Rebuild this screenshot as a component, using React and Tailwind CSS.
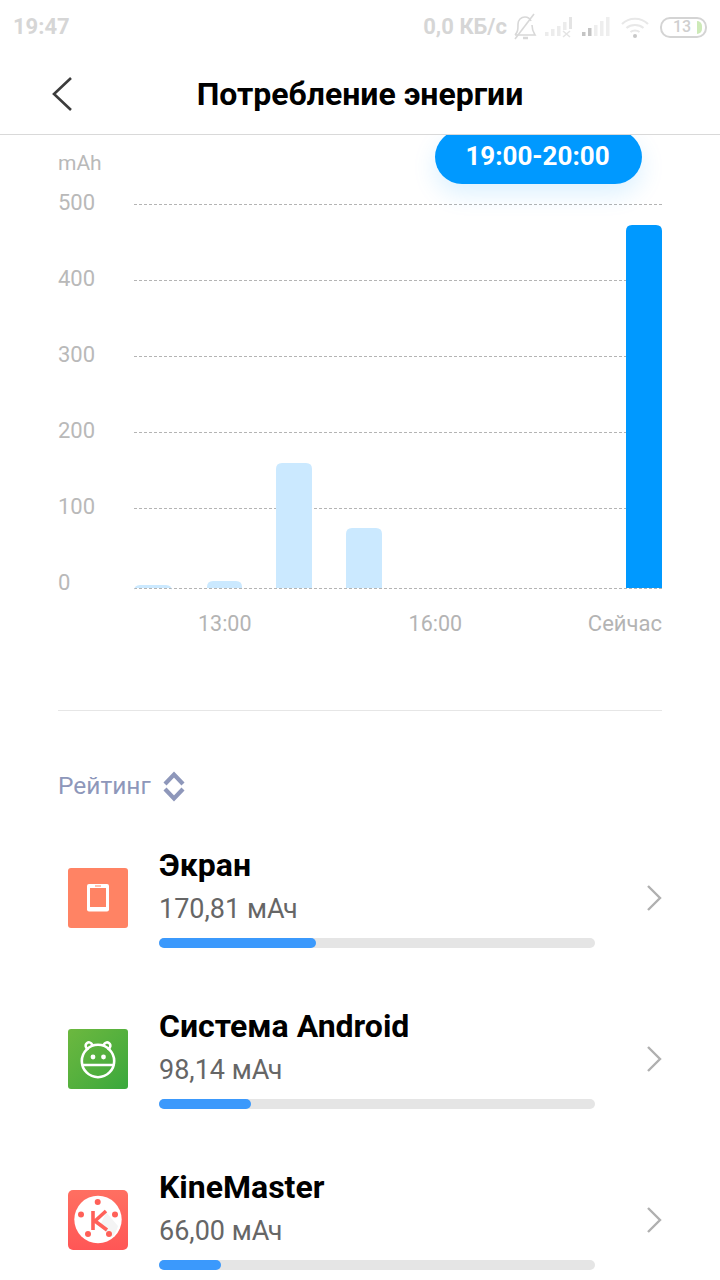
const yLabels = ['500', '400', '300', '200', '100', '0'];

const bars = [
  { x: 134, y: 585, w: 38, color: '#cbe9ff' },
  { x: 207, y: 581, w: 35, color: '#cbe9ff' },
  { x: 276, y: 463, w: 36, color: '#cbe9ff' },
  { x: 346, y: 528, w: 36, color: '#cbe9ff' },
  { x: 626, y: 225, w: 36, color: '#0099ff' },
];

const gridLines = [204, 280, 356, 432, 508, 588];

function ScreenIcon() {
  return (
    <div className="w-[60px] h-[60px] rounded-[3px] bg-[#ff8364] flex items-center justify-center">
      <svg width="22" height="28" viewBox="0 0 22 28">
        <rect x="0" y="0" width="22" height="27.5" rx="2" fill="#fff" />
        <rect x="3" y="4" width="16" height="19" fill="#ff8364" />
        <rect x="8" y="1.5" width="6" height="1" fill="#ff8364" />
      </svg>
    </div>
  );
}

function AndroidIcon() {
  return (
    <div className="w-[60px] h-[60px] rounded-[3px] bg-gradient-to-br from-[#6cb83f] to-[#38a83c]">
      <svg width="60" height="60" viewBox="0 0 60 60" fill="none" stroke="#fff" strokeWidth="2.6">
        <circle cx="30" cy="32" r="16.2" />
        <path d="M13.5 36 H46.5" />
        <path d="M20 21 L18.2 18.5 A3.2 3.2 0 0 1 23.6 14.8 L25.5 17" />
        <path d="M40 21 L41.8 18.5 A3.2 3.2 0 0 0 36.4 14.8 L34.5 17" />
        <circle cx="25" cy="28" r="2.4" fill="#fff" stroke="none" />
        <circle cx="35.5" cy="28" r="2.4" fill="#fff" stroke="none" />
      </svg>
    </div>
  );
}

function KineIcon() {
  return (
    <div className="w-[60px] h-[60px] rounded-[5px] bg-gradient-to-b from-[#ff6f61] to-[#ff5656]">
      <svg width="60" height="60" viewBox="0 0 60 60">
        <circle cx="30" cy="29.5" r="23.7" fill="#fff" />
        <path d="M38 22 L50 36 A23 23 0 0 1 44 47 L32 36 Z" fill="#f4f4f4" />
        <circle cx="29.7" cy="12" r="3" fill="#ff6058" />
        <circle cx="13" cy="24.5" r="3" fill="#ff6058" />
        <circle cx="47" cy="24.5" r="3" fill="#ff6058" />
        <circle cx="20" cy="44" r="3" fill="#ff6058" />
        <circle cx="41" cy="44" r="3" fill="#ff6058" />
        <path d="M25 21 V40 M38 21 L27 31 L39 40" fill="none" stroke="#ff6058" strokeWidth="3.6" />
      </svg>
    </div>
  );
}

const apps = [
  { name: 'Экран', value: '170,81 мАч', fill: 'w-[157px]', Icon: ScreenIcon },
  { name: 'Система Android', value: '98,14 мАч', fill: 'w-[92px]', Icon: AndroidIcon },
  { name: 'KineMaster', value: '66,00 мАч', fill: 'w-[62px]', Icon: KineIcon },
];

function StatusIcons() {
  return (
    <div className="flex items-center">
      <svg width="26" height="30" viewBox="0 0 26 30" fill="none" stroke="#d8d8d8" strokeWidth="1.6" className="ml-[5px]">
        <path d="M3 23 C6 20 6 17 6 12 C6 8 9 5 13 5 C16 5 18 6.5 19 9 M20 13 C20 18 21 20 23 23 H3" />
        <path d="M3 27 L22 2" />
        <path d="M11 26 H16" strokeWidth="2.5" />
      </svg>
      <svg width="30" height="24" viewBox="0 0 30 24" className="ml-[6px]" fill="#ececec">
        <rect x="1" y="17" width="3.5" height="4" />
        <rect x="7" y="14" width="3.5" height="7" />
        <rect x="13" y="11" width="3.5" height="10" />
        <rect x="19" y="7" width="3.5" height="8" />
        <rect x="25" y="2" width="3" height="12" fill="#e4e4e4" />
        <path d="M19 16 L26 22 M26 16 L19 22" stroke="#e4e4e4" strokeWidth="1.6" />
      </svg>
      <svg width="30" height="24" viewBox="0 0 30 24" className="ml-[7px]" fill="#eeeeee">
        <rect x="1" y="17" width="3.5" height="4" fill="#c4c4c4" />
        <rect x="7" y="13" width="3.5" height="8" fill="#c4c4c4" />
        <rect x="13" y="10" width="3.5" height="11" />
        <rect x="19" y="6" width="3.5" height="15" />
        <rect x="25" y="2" width="3.5" height="19" />
      </svg>
      <svg width="30" height="24" viewBox="0 0 30 24" className="ml-[9px]" fill="none" stroke="#e8e8e8" strokeWidth="2.2">
        <path d="M2 9 C9 2 21 2 28 9" />
        <path d="M6.5 13 C11 9 19 9 23.5 13" />
        <path d="M10.5 17 C13 15 17 15 19.5 17" />
        <circle cx="15" cy="21" r="2" fill="#c8c8c8" stroke="none" />
      </svg>
      <div className="ml-[10px] relative w-[47px] h-[21px] rounded-[10px] border-2 border-[#d4d4d4] flex items-center justify-center">
        <span className="text-[16px] leading-none text-[#cfcfcf] font-medium mr-[3px]">13</span>
        <div className="absolute right-[3px] top-[2px] w-[5px] h-[13px] rounded-r-[5px] bg-[#cdeab8]" />
      </div>
    </div>
  );
}

export default function App() {
  return (
    <div className="relative w-[720px] h-[1280px] overflow-hidden bg-white font-['Roboto',sans-serif]">
      {/* status bar */}
      <div className="h-[54px] flex items-center justify-between pl-[13px] pr-[13px]">
        <span className="text-[22px] font-bold text-[#d6d6d6] leading-none">19:47</span>
        <div className="flex items-center">
          <span className="text-[22px] font-bold text-[#d6d6d6] leading-none">0,0 КБ/с</span>
          <StatusIcons />
        </div>
      </div>

      {/* header */}
      <div className="relative h-[81px] border-b border-[#d9d9d9] flex items-center justify-center pb-[1px]">
        <svg width="22" height="36" viewBox="0 0 22 36" fill="none" stroke="#3c3c3c" strokeWidth="2.6" className="absolute left-[51px] top-[22px]">
          <path d="M20 2 L3 18 L20 34" />
        </svg>
        <h1 className="text-[32px] font-bold text-black leading-none">Потребление энергии</h1>
      </div>

      {/* chart */}
      <div className="relative h-[575px] overflow-hidden">
        <svg width="720" height="575" viewBox="0 135 720 575" className="absolute left-0 top-0">
          {gridLines.map((y) => (
            <line key={y} x1="134" x2="662" y1={y + 0.5} y2={y + 0.5} stroke="#b4b4b4" strokeWidth="1" strokeDasharray="3 2" />
          ))}
          {bars.map((b) => (
            <path
              key={b.x}
              d={`M${b.x} 588 V${b.y + 6} Q${b.x} ${b.y} ${b.x + 6} ${b.y} H${b.x + b.w - 6} Q${b.x + b.w} ${b.y} ${b.x + b.w} ${b.y + 6} V588 Z`}
              fill={b.color}
            />
          ))}
        </svg>

        <div className="absolute left-[435px] top-[-5px] w-[207px] h-[54px] pb-[3px] pr-[2px] rounded-full bg-[#0099ff] shadow-[0_10px_24px_rgba(0,153,255,0.14)] flex items-center justify-center">
          <span className="text-[26px] font-bold text-white leading-none">19:00-20:00</span>
        </div>

        <div className="relative pl-[58px] pt-[17px] flex flex-col">
          <span className="text-[21px] leading-[22px] text-[#b9b9b9]">mAh</span>
          <div className="flex flex-col mt-[16px]">
            {yLabels.map((l) => (
              <span key={l} className="h-[76px] text-[22px] leading-[26px] text-[#b9b9b9]">
                {l}
              </span>
            ))}
          </div>
        </div>

        <div className="absolute left-0 top-[477px] w-[662px] flex text-[21.5px] leading-[24px] text-[#b4b4b4]">
          <span className="ml-[198px]">13:00</span>
          <span className="ml-[157px]">16:00</span>
          <span className="ml-auto text-[22px]">Сейчас</span>
        </div>
      </div>

      <div className="mx-[58px] h-px bg-[#e6e6e6]" />

      {/* rating */}
      <div className="pl-[58px] mt-[55px] flex items-center h-[40px]">
        <span className="text-[24.5px] leading-none text-[#8e97ba]">Рейтинг</span>
        <svg width="24" height="31" viewBox="0 0 24 31" fill="none" stroke="#8e97ba" strokeWidth="4.2" className="ml-[11px]">
          <path d="M3 13 L12 3.5 L21 13" />
          <path d="M3 18 L12 27.5 L21 18" />
        </svg>
      </div>

      {/* apps */}
      <div className="mt-[32px] flex flex-col gap-[41px]">
        {apps.map(({ name, value, fill, Icon }) => (
          <div key={name} className="flex items-center h-[120px] pl-[68px]">
            <Icon />
            <div className="ml-[31px] w-[436px]">
              <div className="text-[32px] font-bold text-black leading-[34px]">{name}</div>
              <div className="mt-[11px] text-[27px] text-[#666666] leading-[32px]">{value}</div>
              <div className="mt-[13px] h-[10px] rounded-full bg-[#e5e5e5]">
                <div className={`h-[10px] rounded-full bg-[#3b99fc] ${fill}`} />
              </div>
            </div>
            <svg width="16" height="28" viewBox="0 0 16 28" fill="none" stroke="#b0b0b0" strokeWidth="2.4" className="ml-[51px]">
              <path d="M2 2 L14 14 L2 26" />
            </svg>
          </div>
        ))}
      </div>
    </div>
  );
}
